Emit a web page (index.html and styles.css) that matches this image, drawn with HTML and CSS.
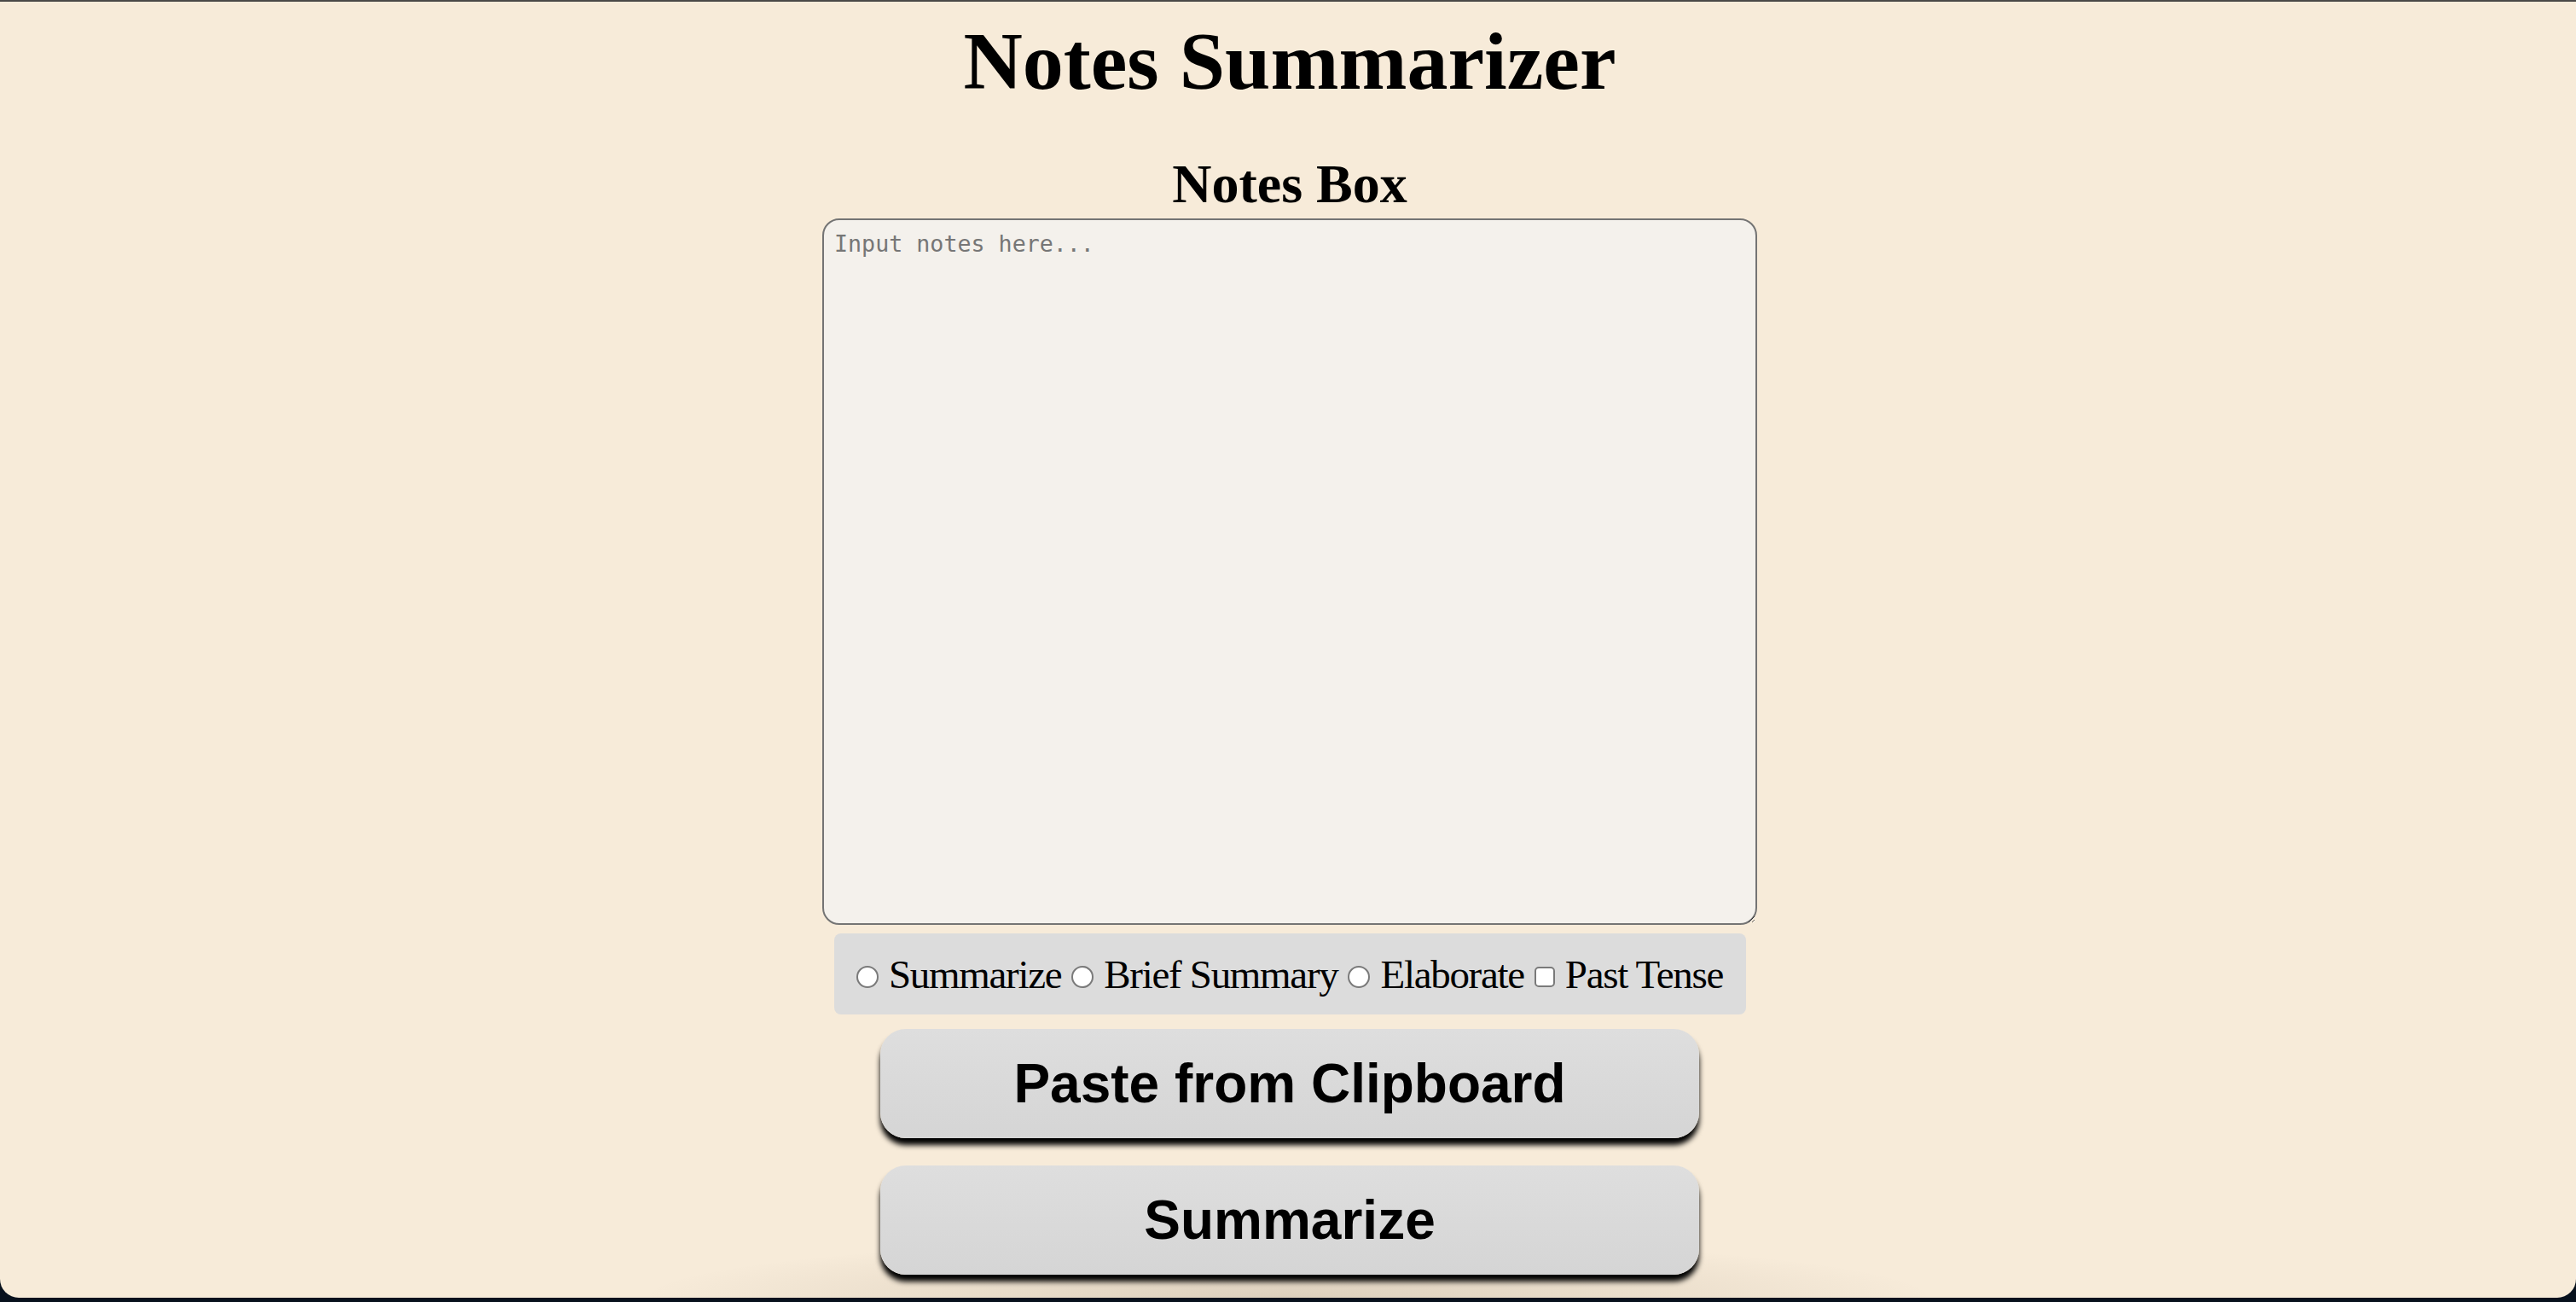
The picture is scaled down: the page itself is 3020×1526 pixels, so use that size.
FILE: index.html
```html
<!DOCTYPE html>
<html lang="en">
<head>
<meta charset="utf-8">
<title>Notes Summarizer</title>
<link rel="stylesheet" href="styles.css">
</head>
<body>
<div class="window">
  <main class="app">
    <h1 class="title">Notes Summarizer</h1>
    <h2 class="subtitle">Notes Box</h2>
    <textarea class="notes" placeholder="Input notes here..."></textarea>
    <div class="options">
      <label class="opt"><input type="radio" name="mode" class="radio"><span>Summarize</span></label>
      <label class="opt"><input type="radio" name="mode" class="radio"><span>Brief Summary</span></label>
      <label class="opt"><input type="radio" name="mode" class="radio"><span>Elaborate</span></label>
      <label class="opt"><input type="checkbox" class="check"><span>Past Tense</span></label>
    </div>
    <button class="btn btn-paste" type="button">Paste from Clipboard</button>
    <button class="btn btn-summarize" type="button">Summarize</button>
  </main>
</div>
</body>
</html>
```

FILE: styles.css
```css
html, body {
  margin: 0;
  padding: 0;
}

body {
  background: #08111d;
  height: 1526px;
  overflow: hidden;
}

.window {
  height: 1521px;
  box-sizing: border-box;
  border-top: 2px solid #4a4947;
  border-radius: 0 0 22px 22px;
  overflow: hidden;
  background:
    radial-gradient(ellipse 760px 70px at 50% 100%, rgba(60, 40, 20, 0.14), rgba(60, 40, 20, 0) 100%),
    #f7ebd9;
}

.app {
  display: flex;
  flex-direction: column;
  align-items: center;
  padding-left: 4px;
}

.title {
  margin: 22px 0 0;
  font: bold 96px/1 "Liberation Serif", "Times New Roman", serif;
  color: #000;
}

.subtitle {
  margin: 64px 0 0;
  font: bold 64px/1 "Liberation Serif", "Times New Roman", serif;
  color: #000;
}

.notes {
  margin-top: 8px;
  width: 1096px;
  height: 828px;
  box-sizing: border-box;
  border: 2px solid #747474;
  border-radius: 20px;
  background: #f4f1ec;
  padding: 12px 12px;
  font: 26.67px "DejaVu Sans Mono", "Liberation Mono", monospace;
  color: #000;
  outline: none;
}

.notes::placeholder {
  color: #767676;
}

.options {
  margin-top: 10px;
  width: 1069px;
  height: 95px;
  box-sizing: border-box;
  background: #dcdcdc;
  border-radius: 8px;
  display: flex;
  align-items: center;
  justify-content: center;
  font: 47px "Liberation Serif", "Times New Roman", serif;
  letter-spacing: -1.3px;
  color: #000;
}

.opt {
  display: flex;
  align-items: center;
  gap: 12px;
  margin-right: 12px;
}

.opt:last-child {
  margin-right: 0;
}

.radio,
.check {
  appearance: none;
  -webkit-appearance: none;
  margin: 7px 0 0;
  background: #fff;
  border: 2px solid #7a7a7a;
  box-sizing: border-box;
  flex: none;
}

.radio {
  width: 26px;
  height: 26px;
  border-radius: 50%;
}

.check {
  width: 24px;
  height: 24px;
  border-radius: 5px;
}

.btn {
  width: 960px;
  height: 128px;
  border: none;
  border-radius: 30px;
  padding: 0;
  background: linear-gradient(#dedede, #d5d5d5);
  box-shadow: 0 8px 6px #000;
  font: bold 64px "Liberation Sans", Arial, sans-serif;
  color: #000;
  cursor: pointer;
}

.btn-paste {
  margin-top: 17px;
}

.btn-summarize {
  margin-top: 32px;
}
```
